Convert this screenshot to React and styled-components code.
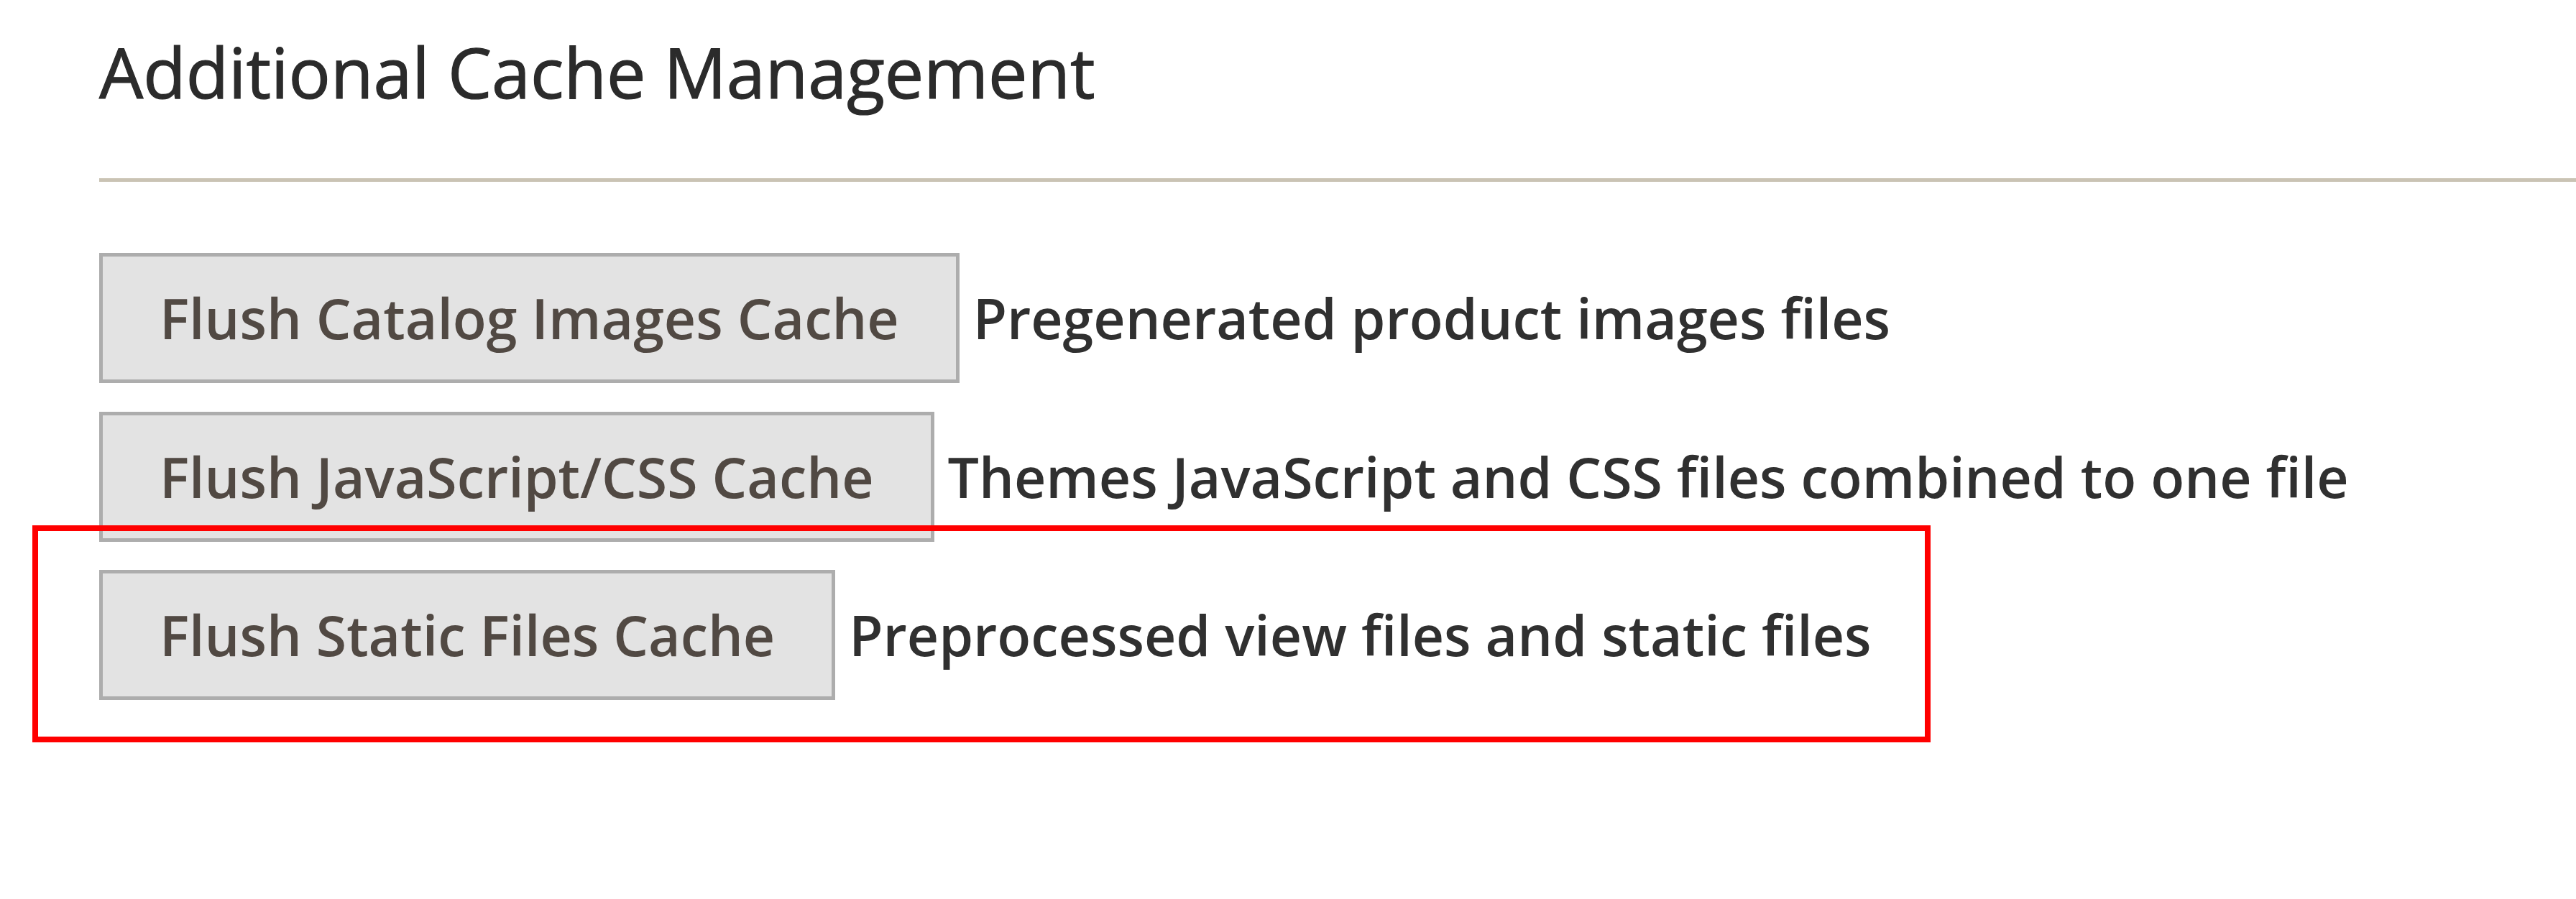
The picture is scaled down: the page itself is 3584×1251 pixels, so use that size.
import React from "react";
import styled, { createGlobalStyle } from "styled-components";

const GlobalStyle = createGlobalStyle`
  html, body {
    margin: 0;
    padding: 0;
    background: #ffffff;
  }
  body {
    font-family: "Open Sans", "Liberation Sans", Arial, sans-serif;
  }
`;

const Page = styled.div`
  padding: 0 0 0 138px;
  min-height: 1251px;
  box-sizing: border-box;
`;

const Title = styled.h2`
  margin: 0;
  padding-top: 33px;
  font-size: 97px;
  font-weight: 400;
  line-height: normal;
  color: #2b2b2b;
  -webkit-text-stroke: 1.2px #2b2b2b;
`;

const Divider = styled.div`
  margin-top: 83px;
  height: 5px;
  background: #cac3b4;
`;

const List = styled.div`
  display: flex;
  flex-direction: column;
  gap: 39.5px;
  margin-top: 99px;
`;

const Row = styled.div`
  position: relative;
  display: flex;
  align-items: center;
`;

const FlushButton = styled.button`
  box-sizing: border-box;
  height: 181px;
  padding: 31px 79px;
  border: 5px solid #adadad;
  border-radius: 0;
  background: #e3e3e3;
  color: #514943;
  font-family: "Open Sans", "Liberation Sans", Arial, sans-serif;
  font-size: 77px;
  font-weight: 600;
  line-height: 109px;
  white-space: nowrap;
  cursor: pointer;
`;

const Note = styled.span`
  margin-left: 19px;
  color: #303030;
  font-size: 77px;
  font-weight: 600;
  white-space: nowrap;
`;

const Highlight = styled.div`
  position: absolute;
  left: -93px;
  top: -62px;
  width: 2641px;
  height: 302px;
  box-sizing: border-box;
  border: 8px solid #ff0000;
  pointer-events: none;
`;

const items = [
  { label: "Flush Catalog Images Cache", note: "Pregenerated product images files" },
  { label: "Flush JavaScript/CSS Cache", note: "Themes JavaScript and CSS files combined to one file" },
  { label: "Flush Static Files Cache", note: "Preprocessed view files and static files", marked: true },
];

export default function App() {
  return (
    <>
      <GlobalStyle />
      <Page>
        <Title>Additional Cache Management</Title>
        <Divider />
        <List>
          {items.map((item) => (
            <Row key={item.label}>
              <FlushButton type="button">{item.label}</FlushButton>
              <Note>{item.note}</Note>
              {item.marked && <Highlight />}
            </Row>
          ))}
        </List>
      </Page>
    </>
  );
}
